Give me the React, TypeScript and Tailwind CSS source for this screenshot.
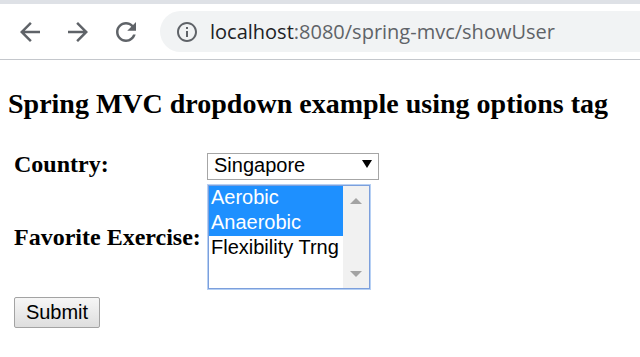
import React from "react";

const iconCls = "w-[30px] h-[30px] fill-[#5f6368]";

export default function App() {
  return (
    <div className="w-[640px] h-[357px] bg-white overflow-hidden">
      <div className="h-[4px] bg-[#dee1e6]" />
      <div className="h-[56px] flex items-center border-b border-[#c4c7cc] pl-[15px]">
        <div className="flex items-center gap-[18px]">
          <svg viewBox="0 0 24 24" className={iconCls}>
            <path d="M20 11H7.83l5.59-5.59L12 4l-8 8 8 8 1.41-1.41L7.83 13H20v-2z" />
          </svg>
          <svg viewBox="0 0 24 24" className={iconCls}>
            <path d="M12 4l-1.41 1.41L16.17 11H4v2h12.17l-5.58 5.59L12 20l8-8z" />
          </svg>
          <svg viewBox="0 0 24 24" className={iconCls}>
            <path d="M17.65 6.35C16.2 4.9 14.21 4 12 4c-4.42 0-7.99 3.58-7.99 8s3.57 8 7.99 8c3.73 0 6.84-2.55 7.73-6h-2.08c-.82 2.33-3.04 4-5.65 4-3.31 0-6-2.69-6-6s2.69-6 6-6c1.66 0 3.14.69 4.22 1.78L13 11h7V4l-2.350 2.35z" />
          </svg>
        </div>
        <div className="ml-[19px] h-[41px] flex-1 rounded-l-full bg-[#f1f3f4] flex items-center pl-[15px]">
          <svg viewBox="0 0 24 24" className="w-[24px] h-[24px] fill-[#5f6368]">
            <path d="M11 7h2v2h-2zm0 4h2v6h-2zm1-9C6.48 2 2 6.48 2 12s4.48 10 10 10 10-4.48 10-10S17.52 2 12 2zm0 18c-4.41 0-8-3.59-8-8s3.59-8 8-8 8 3.59 8 8-3.59 8-8 8z" />
          </svg>
          <div className="ml-[11px] font-['Open_Sans',sans-serif] text-[20px] leading-[26px] whitespace-nowrap">
            <span className="text-[#202124]">localhost</span>
            <span className="text-[#5f6368]">:8080/spring-mvc/showUser</span>
          </div>
        </div>
      </div>

      <div className="pl-[8px] pt-[28px]">
        <h2 className="font-['Liberation_Serif',serif] font-bold text-[28px] leading-[32px] text-black whitespace-nowrap">
          Spring MVC dropdown example using options tag
        </h2>

        <div className="pl-[6px] mt-[33px]">
          <div className="grid grid-cols-[193px_auto] gap-y-[4px] items-start">
            <div className="-mt-[3px] font-['Liberation_Serif',serif] font-bold text-[24px] leading-[28px] text-black">
              Country:
            </div>
            <div className="w-[172px] h-[27px] border border-[#a6a6a6] bg-white flex items-start justify-between pl-[6px] pr-[6px]">
              <span className="font-['Liberation_Sans',Arial,sans-serif] text-[20px] leading-[23px] text-black">
                Singapore
              </span>
              <svg viewBox="0 0 10 8" className="w-[10px] h-[8px] mt-[6px] fill-black">
                <polygon points="0,0 10,0 5,8" />
              </svg>
            </div>

            <div className="self-center font-['Liberation_Serif',serif] font-bold text-[24px] leading-[28px] text-black whitespace-nowrap">
              Favorite Exercise:
            </div>
            <div className="ml-[1px] mt-[1px] w-[162px] h-[104px] border border-[#7c9fdc] shadow-[0_0_0_1px_#b6d0f4] bg-white flex">
              <div className="flex-1 font-['Liberation_Sans',Arial,sans-serif] text-[20px] leading-[23px]">
                <div className="h-[25px] pl-[2px] bg-[#1e90ff] text-white">Aerobic</div>
                <div className="h-[25px] pl-[2px] bg-[#1e90ff] text-white">Anaerobic</div>
                <div className="h-[25px] pl-[2px] text-black whitespace-nowrap">Flexibility Trng</div>
              </div>
              <div className="w-[26px] bg-[#f1f1f1] flex flex-col items-center justify-between pt-[12px] pb-[11px]">
                <svg viewBox="0 0 12 6" className="w-[12px] h-[6px] fill-[#a3a3a3]">
                  <polygon points="0,6 12,6 6,0" />
                </svg>
                <svg viewBox="0 0 12 6" className="w-[12px] h-[6px] fill-[#a3a3a3]">
                  <polygon points="0,0 12,0 6,6" />
                </svg>
              </div>
            </div>
          </div>

          <button className="mt-[8px] w-[86px] h-[31px] border border-[#a3a3a3] rounded-[2px] bg-linear-to-b from-[#f6f6f6] to-[#dedede] font-['Liberation_Sans',Arial,sans-serif] text-[20px] leading-[23px] text-black">
            Submit
          </button>
        </div>
      </div>
    </div>
  );
}
